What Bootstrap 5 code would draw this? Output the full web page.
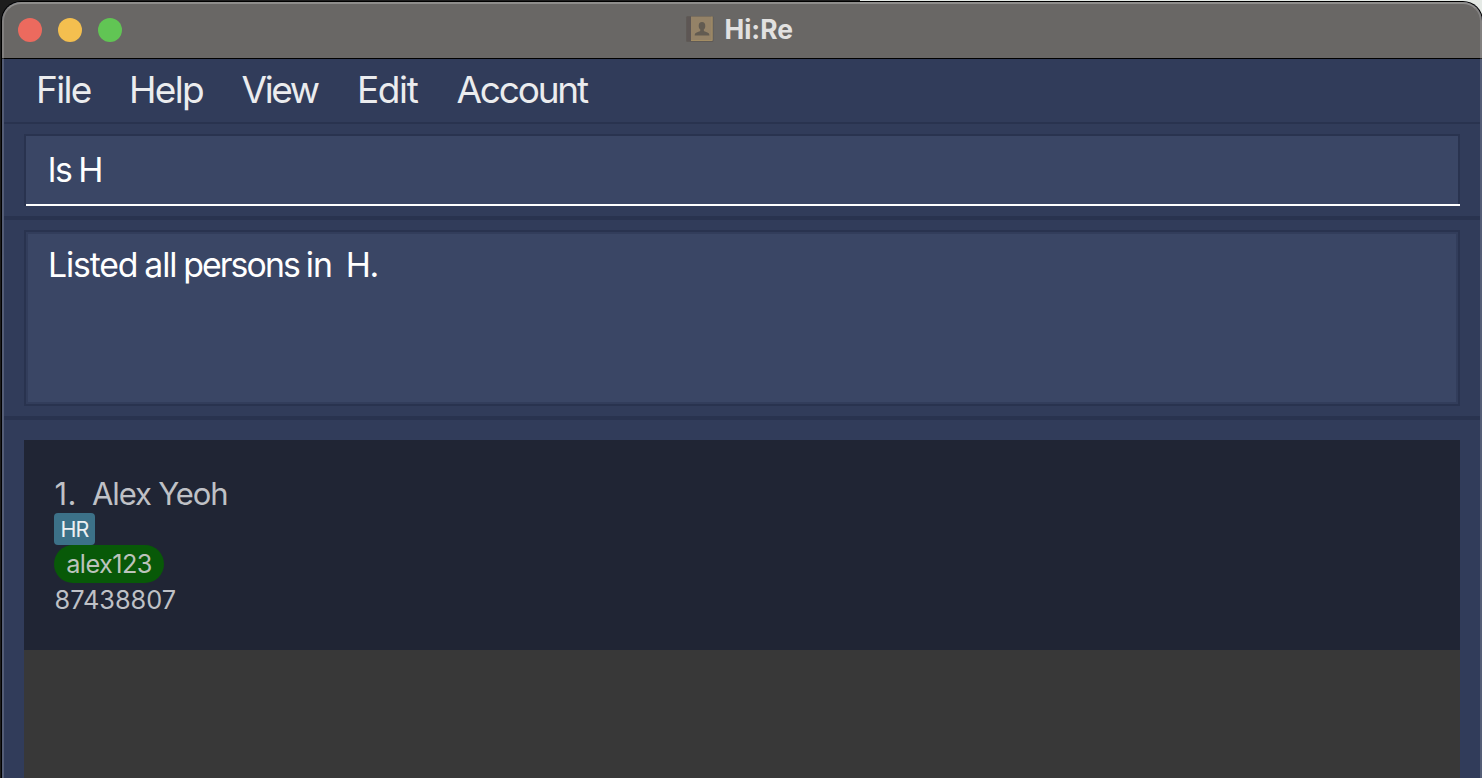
<!DOCTYPE html>
<html lang="en">
<head>
<meta charset="utf-8">
<meta name="viewport" content="width=device-width, initial-scale=1">
<title>Hi:Re</title>
<link href="https://cdn.jsdelivr.net/npm/bootstrap@5.3.0/dist/css/bootstrap.min.css" rel="stylesheet">
<style>
  body { font-family: Inter, "Liberation Sans", sans-serif; height: 778px; padding: 2px 0 0 2px;
    background: linear-gradient(90deg, #1d1d1d 860px, #e4e9e5 860px); }
  .app-window { height: 776px; background: #313c5a; border-radius: 19px 19px 0 0; box-shadow: 0 0 0 1px #000; position: relative; }
  .app-window::after { content: ""; position: absolute; inset: 0; pointer-events: none; border: 2px solid rgba(255,255,255,.17); border-top-color: rgba(255,255,255,.25); border-bottom: 0; border-radius: inherit; }
  .titlebar { height: 57px; background: #696765; border-bottom: 1px solid #000; padding-left: 16px; }
  .light { width: 24px; height: 24px; border-radius: 50%; margin-right: 16px; }
  .light-red { background: #ec6a5e; }
  .light-yellow { background: #f4bf4f; }
  .light-green { background: #61c554; }
  .title-group { margin-left: 547px; padding-bottom: 2px; }
  .title-text { font-size: 26.4px; line-height: 30px; font-weight: 700; color: #e2e1e0; margin-left: 9.5px; }
  .menubar { height: 63px; padding-left: 34px; font-size: 37px; line-height: 46px; color: #ebecee; padding-top: 8px; }
  .menubar a { color: inherit; text-decoration: none; white-space: nowrap; letter-spacing: -1.7px; }
  .menubar .item-file { width: 93px; }
  .menubar .item-help { width: 112.5px; }
  .menubar .item-view { width: 115.5px; letter-spacing: -2.4px; }
  .menubar .item-edit { width: 99.5px; letter-spacing: -1.4px; }
  .menubar .item-account { letter-spacing: -2.2px; }
  .rule-thin { height: 2px; background: #29334f; margin: 0 2px; }
  .rule-thick { height: 4px; background: #29334f; margin: 0 2px; }
  .field-box { margin: 10px 22px 10px; height: 72px; background: #3a4665; border: 2px solid #29334f; border-bottom: 0; color: #fff; font-size: 33.8px; letter-spacing: -1.2px; word-spacing: -1.6px; }
  .field-box > div { height: 70px; border-bottom: 2px solid #fff; margin-right: -2px; padding-left: 22px; line-height: 68px; }
  .result-box { margin: 10px 22px 10px; height: 176px; background: #3a4665; border: 2px solid #29334f; box-shadow: inset 0 0 0 2px #323d5b; color: #fff; font-size: 33.8px; letter-spacing: -1.15px; word-spacing: -1.4px; line-height: 42px; padding: 12px 22px; white-space: pre; }
  .result-box .plural { letter-spacing: -1.9px; }
  .people { margin: 20px 22px 0; height: 338px; background: #383838; }
  .person { height: 210px; background: #202534; color: #bfc1c6; padding: 34px 30px; }
  .person-name { font-size: 31px; line-height: 39px; letter-spacing: -1.12px; }
  .person-index { width: 38px; letter-spacing: .5px; padding-left: .5px; }
  .dept { width: 41px; height: 32px; line-height: 33px; border-radius: 4px; background: #3c7188; color: #ecf0f2; font-size: 21.5px; letter-spacing: -1px; padding: 0; font-weight: 400; text-align: center; }
  .user { width: 110px; height: 38px; line-height: 38px; background: #085908; color: #bcc3bc; font-size: 25.3px; letter-spacing: -.6px; padding: 0; font-weight: 400; text-align: center; }
  .phone { font-size: 25.3px; line-height: 34px; padding-left: .5px; }
</style>
</head>
<body>
<main class="app-window overflow-hidden">
  <header class="titlebar d-flex align-items-center">
    <span class="light light-red"></span>
    <span class="light light-yellow"></span>
    <span class="light light-green"></span>
    <div class="title-group d-flex align-items-center">
      <svg width="30" height="28" viewBox="0 0 30 28" aria-hidden="true">
        <rect x="1" y="1" width="27.500" height="26" rx="1.5" fill="#5f5a56"/>
        <rect x="2" y="2" width="4" height="24" fill="#5d5654"/>
        <rect x="6" y="1.500" width="21.500" height="24.500" fill="#948267"/>
        <path d="M6 25.500h21v-24" fill="none" stroke="#a38d64"/>
        <path d="M17 7c2.200 0 3.300 1.600 3.300 3.900 0 1.600-.7 2.900-1.500 3.600v1.100c0 .8 1.500 1.200 3 1.700 1.700.5 2.600 1.200 2.600 3.200H9.700c0-2 .9-2.700 2.600-3.200 1.500-.5 3-.9 3-1.700v-1.100c-.8-.7-1.600-2-1.600-3.600C13.700 8.600 14.800 7 17 7z" fill="#625b51"/>
      </svg>
      <span class="title-text">Hi:Re</span>
    </div>
  </header>
  <nav class="menubar d-flex">
    <a href="#" class="item-file">File</a>
    <a href="#" class="item-help">Help</a>
    <a href="#" class="item-view">View</a>
    <a href="#" class="item-edit">Edit</a>
    <a href="#" class="item-account">Account</a>
  </nav>
  <div class="rule-thin"></div>
  <div class="field-box"><div>ls H</div></div>
  <div class="rule-thick"></div>
  <div class="result-box">Listed all <span class="plural">persons</span> in  H.</div>
  <div class="rule-thick"></div>
  <section class="people">
    <article class="person d-flex flex-column align-items-start">
      <div class="person-name d-flex"><span class="person-index">1.</span><span>Alex Yeoh</span></div>
      <span class="dept badge">HR</span>
      <span class="user badge rounded-pill">alex123</span>
      <div class="phone">87438807</div>
    </article>
  </section>
</main>
<script src="https://cdn.jsdelivr.net/npm/bootstrap@5.3.0/dist/js/bootstrap.bundle.min.js"></script>
</body>
</html>
